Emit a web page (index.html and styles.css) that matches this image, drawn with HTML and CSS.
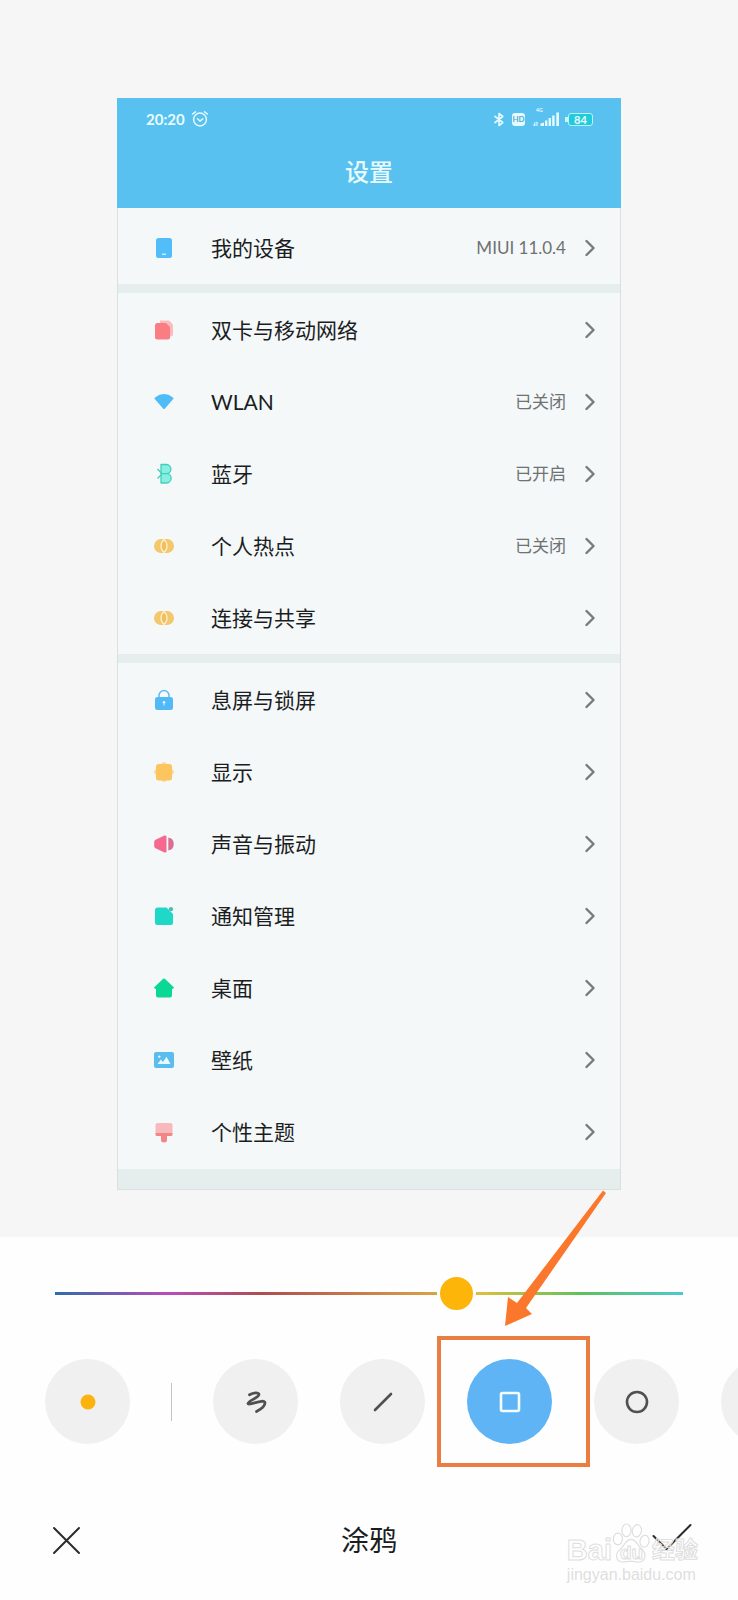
FILE: index.html
```
<!DOCTYPE html>
<html lang="zh-CN">

<head>
    <meta charset="UTF-8">
    <meta name="viewport" content="width=device-width, initial-scale=1.0">
    <title>涂鸦</title>
    <link rel="stylesheet" href="styles.css">
</head>

<body>
    <svg class="defs" aria-hidden="true">
        <symbol id="chevron" viewBox="0 0 10 18">
            <path d="M1.5 2 L8.5 9 L1.5 16" fill="none" stroke="#777b7c" stroke-width="2.4" stroke-linecap="round" stroke-linejoin="round" />
        </symbol>
        <symbol id="rings" viewBox="0 0 24 24">
            <rect x="2" y="5" width="20" height="14" rx="7" fill="#f3c76c" />
            <path d="M12 5.5 C8 9 8 15 12 18.5 C16 15 16 9 12 5.5Z" fill="#f0bf5f" stroke="#fdf0cc" stroke-width="1.2" />
        </symbol>
    </svg>

    <main class="stage">
        <section class="phone">
            <header class="phone-header">
                <div class="status">
                    <span class="time">20:20</span>
                    <svg class="alarm" width="18" height="18" viewBox="0 0 18 18" fill="none" stroke="#e4fbff" stroke-width="1.5" stroke-linecap="round">
                        <circle cx="9" cy="9.5" r="6.4" />
                        <path d="M6.5 8.8 L9 11 L11.8 8.8 M1.6 4 L4.4 1.8 M16.4 4 L13.6 1.8" />
                    </svg>
                    <svg class="bt" width="12" height="15" viewBox="0 0 12 15" fill="none" stroke="#e4fbff" stroke-width="1.6" stroke-linejoin="round">
                        <path d="M1.5 4 L9.8 10.5 L6 13.5 V1.5 L9.8 4.5 L1.5 11" />
                    </svg>
                    <span class="hd">HD</span>
                    <span class="signal">
                        <span class="net">4G</span>
                        <svg width="28" height="16" viewBox="0 0 28 16" fill="#e4fbff">
                            <path d="M0.5 12 L2 14.5 L2.6 11 H3.4 V15 H1.6Z M4.4 15 V10.5 L6.5 12 L5.5 12.4 V15Z" />
                            <path d="M8.5 15 V12.5 L12 11.5 V15Z M13 9.5 H15.4 V15 H13Z M16.6 7 H19 V15 H16.6Z M20.2 4.5 H22.6 V15 H20.2Z M24.3 1.5 H27 V15 H24.3Z" />
                        </svg>
                    </span>
                    <span class="battery">84</span>
                </div>
                <h1>设置</h1>
            </header>

            <nav class="list">
                <div class="group device">
                    <a class="row" href="#">
                        <svg class="icon" viewBox="0 0 24 24">
                            <rect x="4" y="2" width="16" height="20" rx="2.5" fill="#52bdf8" />
                            <rect x="10" y="17.6" width="4" height="1.5" rx=".7" fill="#c7f0ff" />
                        </svg>
                        <span class="label">我的设备</span>
                        <span class="value">MIUI 11.0.4</span>
                        <svg class="chevron"><use href="#chevron" /></svg>
                    </a>
                </div>

                <div class="group network">
                    <a class="row" href="#">
                        <svg class="icon" viewBox="0 0 24 24">
                            <path d="M8 2.5 H17 L21 6.5 V16 Q21 18.5 18.5 18.5 H8Z" fill="#fbbcbe" />
                            <path d="M5.5 5 H14 L18 9 V19.5 Q18 21.5 16 21.5 H5.5 Q3 21.5 3 19.5 V7.5 Q3 5 5.5 5Z" fill="#fb7d84" />
                        </svg>
                        <span class="label">双卡与移动网络</span>
                        <svg class="chevron"><use href="#chevron" /></svg>
                    </a>
                    <a class="row" href="#">
                        <svg class="icon" viewBox="0 0 24 24">
                            <path d="M2.8 9 Q2 8.2 3 7.4 Q12 .6 21 7.4 Q22 8.2 21.2 9 L13 18.6 Q12 19.6 11 18.6Z" fill="#4fbcf8" />
                        </svg>
                        <span class="label">WLAN</span>
                        <span class="value">已关闭</span>
                        <svg class="chevron"><use href="#chevron" /></svg>
                    </a>
                    <a class="row" href="#">
                        <svg class="icon" viewBox="0 0 24 24" stroke="#45cdbb" stroke-width="1.3" stroke-linejoin="round">
                            <path d="M9 2.5 H14.5 A4.4 4.6 0 0 1 14.5 11.7 A4.6 4.6 0 0 1 14.5 21 H9Z M9 11.7 H14.5" fill="#86efe1" />
                            <path d="M5.5 7 L9.5 11.2 M5.5 16.5 L9.5 12.5" fill="none" />
                        </svg>
                        <span class="label">蓝牙</span>
                        <span class="value">已开启</span>
                        <svg class="chevron"><use href="#chevron" /></svg>
                    </a>
                    <a class="row" href="#">
                        <svg class="icon"><use href="#rings" /></svg>
                        <span class="label">个人热点</span>
                        <span class="value">已关闭</span>
                        <svg class="chevron"><use href="#chevron" /></svg>
                    </a>
                    <a class="row" href="#">
                        <svg class="icon"><use href="#rings" /></svg>
                        <span class="label">连接与共享</span>
                        <svg class="chevron"><use href="#chevron" /></svg>
                    </a>
                </div>

                <div class="group system">
                    <a class="row" href="#">
                        <svg class="icon" viewBox="0 0 24 24">
                            <path d="M7 10 V7.5 A5 5 0 0 1 17 7.5 V10" fill="none" stroke="#5cbdf2" stroke-width="1.5" />
                            <rect x="3" y="9" width="18" height="13" rx="2.5" fill="#51b9f6" />
                            <circle cx="12" cy="14.2" r="1.3" fill="#d8f4ff" />
                            <path d="M11.5 14 H12.5 V17.5 H11.5Z" fill="#d8f4ff" />
                        </svg>
                        <span class="label">息屏与锁屏</span>
                        <svg class="chevron"><use href="#chevron" /></svg>
                    </a>
                    <a class="row" href="#">
                        <svg class="icon" viewBox="0 0 24 24">
                            <path d="M12 1.5 L15 4 H9Z M12 22.5 L9 20 H15Z M1.5 12 L4 9 V15Z M22.5 12 L20 15 V9Z" fill="#fbd99a" />
                            <rect x="4" y="4" width="16" height="16.5" rx="2.5" fill="#fcc55f" />
                        </svg>
                        <span class="label">显示</span>
                        <svg class="chevron"><use href="#chevron" /></svg>
                    </a>
                    <a class="row" href="#">
                        <svg class="icon" viewBox="0 0 24 24">
                            <path d="M12.5 3.6 Q14.5 3 14.5 5 V19 Q14.5 21 12.5 20.4 L4 16.6 Q2.2 15.8 2.2 14.2 V9.8 Q2.2 8.2 4 7.4Z" fill="#f5698f" />
                            <path d="M16.3 5.5 A6.6 6.6 0 0 1 16.3 18.5Z" fill="#d86e94" />
                        </svg>
                        <span class="label">声音与振动</span>
                        <svg class="chevron"><use href="#chevron" /></svg>
                    </a>
                    <a class="row" href="#">
                        <svg class="icon" viewBox="0 0 24 24">
                            <path d="M5.5 3.5 H14.5 L21 10 V18.5 Q21 21 18.5 21 H5.5 Q3 21 3 18.5 V6 Q3 3.5 5.5 3.5Z" fill="#1fd8c8" />
                            <circle cx="19" cy="5.2" r="2.1" fill="#45bfb4" />
                        </svg>
                        <span class="label">通知管理</span>
                        <svg class="chevron"><use href="#chevron" /></svg>
                    </a>
                    <a class="row" href="#">
                        <svg class="icon" viewBox="0 0 24 24">
                            <path d="M11.2 2.8 Q12 2.2 12.8 2.8 L22 11.5 Q22 12.8 20.5 12.8 H20 V19.5 Q20 21.5 18 21.5 H6 Q4 21.5 4 19.5 V12.8 H3.5 Q2 12.8 2 11.5Z" fill="#0ad894" />
                        </svg>
                        <span class="label">桌面</span>
                        <svg class="chevron"><use href="#chevron" /></svg>
                    </a>
                    <a class="row" href="#">
                        <svg class="icon" viewBox="0 0 24 24">
                            <rect x="2" y="4" width="20" height="16" rx="2" fill="#5bbcee" />
                            <path d="M5.5 16 L9 11.5 L11 14 L14.5 8.8 L18.5 16Z" fill="#e6faff" />
                            <circle cx="7.3" cy="8.6" r="1.2" fill="#e6faff" />
                        </svg>
                        <span class="label">壁纸</span>
                        <svg class="chevron"><use href="#chevron" /></svg>
                    </a>
                    <a class="row" href="#">
                        <svg class="icon" viewBox="0 0 24 24">
                            <path d="M3.5 13 H20.5 V14.5 Q20.5 16 19 16 H15 V20 Q15 22.5 12 22.5 Q9 22.5 9 20 V16 H5 Q3.5 16 3.5 14.5Z" fill="#f28588" />
                            <path d="M5.5 3 H18.5 Q20.5 3 20.5 5 V13 H3.5 V5 Q3.5 3 5.5 3Z" fill="#f8b9bc" />
                        </svg>
                        <span class="label">个性主题</span>
                        <svg class="chevron"><use href="#chevron" /></svg>
                    </a>
                </div>
            </nav>
        </section>
    </main>

    <section class="panel">
        <input class="colors" type="range" min="0" max="1000" value="648" aria-label="颜色">

        <div class="tools">
            <button class="tool" type="button" aria-label="粗细">
                <svg viewBox="0 0 28 28"><circle cx="14" cy="14" r="7.5" fill="#fcb310" /></svg>
            </button>
            <span class="separator"></span>
            <button class="tool" type="button" aria-label="画笔">
                <svg viewBox="0 0 28 28" fill="none" stroke="#505050" stroke-width="2.8" stroke-linecap="round" stroke-linejoin="round">
                    <path d="M7.5 6.8 C11 4.8 17 4 17 6.5 C17 9.5 6 13 6 15.5 C6 18 23 10 23 14.8 C23 18 18.5 21.5 14.5 23.5" />
                </svg>
            </button>
            <button class="tool" type="button" aria-label="直线">
                <svg viewBox="0 0 28 28" fill="none" stroke="#505050" stroke-width="2.6" stroke-linecap="round">
                    <path d="M6 22 L22 6" />
                </svg>
            </button>
            <button class="tool selected" type="button" aria-label="矩形">
                <svg viewBox="0 0 28 28" fill="none" stroke="#f4fdff" stroke-width="2.6">
                    <rect x="5" y="5" width="18" height="18" rx="1.5" />
                </svg>
                <span class="marker"></span>
            </button>
            <button class="tool" type="button" aria-label="圆形">
                <svg viewBox="0 0 28 28" fill="none" stroke="#505050" stroke-width="2.6">
                    <circle cx="14" cy="14" r="10" />
                </svg>
            </button>
            <button class="tool" type="button" aria-label="箭头">
                <svg viewBox="0 0 28 28" fill="none" stroke="#505050" stroke-width="2.6" stroke-linecap="round">
                    <path d="M6 22 L22 6 M12 6 H22 V16" />
                </svg>
            </button>
        </div>

        <div class="actions">
            <button class="action" type="button" aria-label="取消">
                <svg viewBox="0 0 40 40"><path d="M8 8 L33 33 M33 8 L8 33" /></svg>
            </button>
            <h2>涂鸦</h2>
            <button class="action" type="button" aria-label="完成">
                <svg viewBox="0 0 40 40"><path d="M1.5 16 L14.5 29 L38.5 5" /></svg>
            </button>
        </div>

        <svg class="arrow" width="104" height="140" viewBox="0 0 104 140" aria-hidden="true">
            <path d="M99 1.5 L102 4 L22 119 L28 125 L1 137 L4 108 L13 114Z" fill="#fb772b" />
        </svg>

        <div class="watermark">
            <div class="brand">
                <span>Bai</span>
                <span class="paw">
                    <svg width="38" height="44" viewBox="0 0 42 44" fill="#fff" fill-opacity=".5" stroke="#dedede" stroke-width="1.3">
                        <ellipse cx="6.5" cy="17.5" rx="5" ry="6.5" />
                        <ellipse cx="16" cy="8" rx="5" ry="7" />
                        <ellipse cx="27.5" cy="8.5" rx="5" ry="6.8" transform="rotate(12 27.5 8.5)" />
                        <ellipse cx="36" cy="20" rx="5" ry="6.5" transform="rotate(10 36 20)" />
                        <path d="M21 18 C27 18 28 25 33 29 C39 34 37 43 29 43 C25 43 24 42 21 42 C18 42 16 43 12 43 C4 43 3 34 9 29 C14 25 15 18 21 18Z" />
                    </svg>
                    <span class="du">du</span>
                </span>
                <span class="cn">经验</span>
            </div>
            <div class="site">jingyan.baidu.com</div>
        </div>
    </section>
</body>

</html>
```
FILE: styles.css
```
* {
    box-sizing: border-box;
}

body {
    font-family: Lato, 'Noto Sans CJK SC', sans-serif;
    margin: 0;
    background-color: #fefefe;
    color: #1b1d1e;
}

h1,
h2 {
    margin: 0;
}

button {
    padding: 0;
    border: none;
    background: none;
    cursor: pointer;
}

.defs {
    display: none;
}

/* screenshot being edited */
.stage {
    padding: 98px 117px 47px;
    background-color: #f6f6f6;
}

.phone-header {
    padding-bottom: 4px;
    background-color: #59c1f0;
    color: #e8fcff;
}

.status {
    display: flex;
    align-items: center;
    height: 42px;
    padding: 0 28px 0 29px;
}

.time {
    font-size: 15px;
    font-weight: bold;
}

.alarm {
    margin-left: 6px;
}

.bt {
    margin-left: auto;
}

.hd {
    margin-left: 7px;
    width: 13px;
    border-radius: 3px;
    background-color: #e4fbff;
    color: #59a9cf;
    font-size: 8px;
    line-height: 13px;
    font-weight: bold;
    text-align: center;
}

.signal {
    position: relative;
    display: flex;
    margin-left: 7px;
}

.net {
    position: absolute;
    left: 4px;
    top: -4px;
    font-size: 5px;
    line-height: 6px;
    font-weight: bold;
}

.battery {
    position: relative;
    margin-left: 8px;
    width: 25px;
    border: 1px solid #b9f3f5;
    border-radius: 3px;
    background-color: #22cbdc;
    font-size: 11px;
    line-height: 11px;
    font-weight: bold;
    text-align: center;
}

.battery::before {
    content: "";
    position: absolute;
    left: -4px;
    top: 3px;
    width: 3px;
    height: 5px;
    background-color: #c9f7f8;
}

h1 {
    font-size: 24px;
    line-height: 64px;
    font-weight: 500;
    text-align: center;
}

.list {
    border: 1px solid #d9e1e1;
    border-top: none;
    padding-bottom: 20px;
    background-color: #e6eeed;
}

.group {
    background-color: #f4f8f9;
}

.group + .group {
    margin-top: 9px;
}

.network {
    padding-top: 1px;
}

.system {
    padding: 1px 0;
}

.row {
    display: flex;
    align-items: center;
    height: 72px;
    padding: 0 25px 0 34px;
    color: inherit;
    text-decoration: none;
}

.device .row {
    height: 76px;
    padding-top: 3px;
}

.icon {
    width: 24px;
    height: 24px;
}

.label {
    flex: 1;
    margin-left: 35px;
    font-size: 21px;
    line-height: 30px;
}

.value {
    color: #6d7273;
    font-size: 17px;
    line-height: 24px;
}

.chevron {
    width: 10px;
    height: 18px;
    margin-left: 19px;
}

/* drawing controls */
.panel {
    position: relative;
    padding: 36px 0 39px;
}

.colors {
    appearance: none;
    display: block;
    width: calc(100% - 110px);
    height: 40px;
    margin: 0 55px;
    background: linear-gradient(to right, #2f6cab, #b84db8 18%, #b04c50 33%, #d29048 55%, #d8c040 68%, #5cc25c 84%, #4cc8d0) center / 100% 3px no-repeat;
}

.colors::-webkit-slider-thumb {
    appearance: none;
    width: 39px;
    height: 39px;
    border: 3px solid #fefefe;
    border-radius: 50%;
    background-color: #fdb50a;
}

.tools {
    display: flex;
    align-items: center;
    gap: 42px;
    margin-top: 46px;
    padding-left: 45px;
    overflow-x: clip;
}

.tool {
    position: relative;
    display: flex;
    align-items: center;
    justify-content: center;
    flex: none;
    width: 85px;
    height: 85px;
    border-radius: 50%;
    background-color: #f0f0f0;
}

.tool svg {
    width: 28px;
    height: 28px;
}

.selected {
    background-color: #5eb4f5;
}

.separator {
    flex: none;
    width: 1px;
    height: 38px;
    margin: 0 -1px;
    background-color: #c4c4c4;
}

.marker {
    position: absolute;
    left: -30px;
    top: -23px;
    width: 153px;
    height: 131px;
    border: 4px solid #ea7d41;
}

.arrow {
    position: absolute;
    left: 504px;
    top: -48px;
}

.actions {
    display: flex;
    align-items: center;
    justify-content: space-between;
    margin-top: 76px;
    padding: 0 46px 1px;
}

.action,
.action svg {
    display: block;
    width: 40px;
    height: 40px;
}

.action path {
    fill: none;
    stroke: #2b2b2b;
    stroke-width: 2;
    stroke-linecap: round;
}

h2 {
    font-size: 28px;
    line-height: 40px;
    font-weight: 400;
}

.watermark {
    position: absolute;
    right: 40px;
    bottom: 15px;
    color: rgba(255, 255, 255, .5);
    font-family: 'Liberation Sans', 'Noto Sans CJK SC', sans-serif;
    font-weight: bold;
    -webkit-text-stroke: 1px #dedede;
    pointer-events: none;
}

.brand {
    display: flex;
    align-items: flex-end;
    font-size: 29px;
    line-height: 29px;
}

.paw {
    position: relative;
    height: 44px;
}

.du {
    position: absolute;
    left: 8px;
    bottom: 1px;
    font-size: 19px;
    line-height: 22px;
}

.cn {
    margin-left: 2px;
    font-size: 23px;
}

.site {
    color: #dedede;
    font-size: 16px;
    line-height: 20px;
    font-weight: normal;
    -webkit-text-stroke: 0;
}
```
